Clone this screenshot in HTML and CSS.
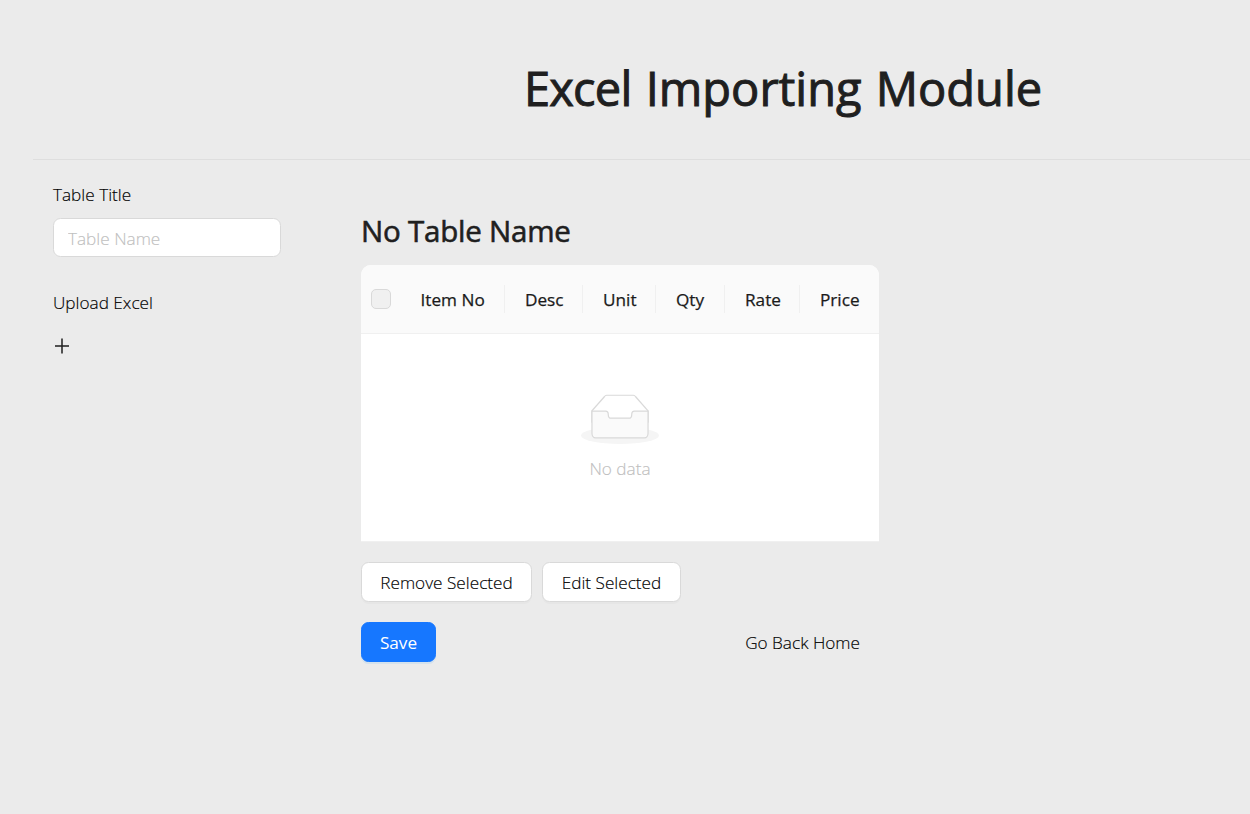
FILE: index.html
```html
<!DOCTYPE html>
<html lang="en">
<head>
<meta charset="utf-8">
<title>Excel Importing Module</title>
<link rel="stylesheet" href="styles.css">
</head>
<body>
<div class="page">
  <header class="header"><h1 class="title"><span class="title-lead">Excel</span> Importing Module</h1></header>
  <div class="content">
    <aside class="sidebar">
      <label class="label label-title" for="table-name">Table Title</label>
      <input class="input" id="table-name" type="text" placeholder="Table Name">
      <div class="label label-upload">Upload Excel</div>
      <svg class="plus" viewBox="0 0 18 18" width="18" height="18"><path d="M9 1.5v15M2 9h14" fill="none" stroke="#1f1f1f" stroke-width="1.5"/></svg>
    </aside>
    <main class="main">
      <h2 class="table-name">No Table Name</h2>
      <div class="table">
        <div class="table-head">
          <div class="cell cell-check"><span class="checkbox"></span></div>
          <div class="cell cell-item"><span>Item No</span></div>
          <div class="cell cell-desc"><span>Desc</span></div>
          <div class="cell cell-unit"><span>Unit</span></div>
          <div class="cell cell-qty"><span>Qty</span></div>
          <div class="cell cell-rate"><span>Rate</span></div>
          <div class="cell cell-price"><span>Price</span></div>
        </div>
        <div class="empty">
          <svg class="empty-icon" viewBox="0 0 64 41" width="78" height="50">
            <g transform="translate(0 1)" fill="none" fill-rule="evenodd">
              <ellipse fill="#f5f5f5" cx="32" cy="33" rx="32" ry="7"/>
              <g fill-rule="nonzero" stroke="#d9d9d9">
                <path d="M55 12.76L44.854 1.258C44.367.474 43.656 0 42.907 0H21.093c-.749 0-1.46.474-1.947 1.257L9 12.761V22h46v-9.24z"/>
                <path d="M41.613 15.931c0-1.605.994-2.93 2.227-2.931H55v18.137C55 33.26 53.68 35 52.05 35h-40.1C10.32 35 9 33.259 9 31.137V13h11.16c1.233 0 2.227 1.323 2.227 2.928v.022c0 1.605 1.005 2.901 2.237 2.901h14.752c1.232 0 2.237-1.308 2.237-2.913v-.007z" fill="#fafafa"/>
              </g>
            </g>
          </svg>
          <div class="empty-text">No data</div>
        </div>
      </div>
      <div class="actions">
        <button class="btn btn-remove" type="button">Remove Selected</button>
        <button class="btn btn-edit" type="button">Edit Selected</button>
      </div>
      <div class="footer">
        <button class="btn btn-primary" type="button">Save</button>
        <a class="home">Go Back Home</a>
      </div>
    </main>
  </div>
</div>
</body>
</html>
```

FILE: styles.css
```css
* { box-sizing: border-box; }
body {
  margin: 0;
  height: 814px;
  overflow: hidden;
  background: #ebebeb;
  color: #1f1f1f;
  font: 300 17.2px/28px "Open Sans", "Noto Sans", sans-serif;
  -webkit-text-stroke-width: 0.15px;
}
.page { padding-left: 33px; }
.header {
  height: 160px;
  padding: 58px 0 0 491px;
  border-bottom: 1px solid #dedede;
}
.title { margin: 0; font-size: 47px; line-height: 60px; font-weight: 500; word-spacing: 2px; white-space: nowrap; -webkit-text-stroke-width: 1px; }
.title-lead { letter-spacing: -0.8px; }
.content { display: flex; }
.sidebar { width: 248px; padding: 21px 0 0 20px; }
.label { display: block; white-space: nowrap; color: #000; }
.input {
  display: block;
  width: 228px;
  height: 39px;
  margin: 9px 0 32px;
  padding: 2px 14px 0;
  border: 1px solid #d9d9d9;
  border-radius: 7.5px;
  background: #fff;
  font: inherit;
}
.input::placeholder { color: #bfbfbf; opacity: 1; }
.plus { display: block; margin-top: 20px; }
.main { width: 518px; margin-left: 80px; padding-top: 51px; }
.table-name { margin: 0; font-size: 29.5px; letter-spacing: -0.22px; line-height: 40px; font-weight: 500; white-space: nowrap; -webkit-text-stroke-width: 0.6px; }
.table { margin-top: 14px; height: 277px; background: #fff; border-radius: 10px 10px 0 0; border-bottom: 1px solid #f0f0f0; }
.table-head { display: flex; height: 69px; background: #fafafa; border-bottom: 1px solid #f0f0f0; border-radius: 10px 10px 0 0; align-items: center; }
.cell { height: 28px; padding-left: 20px; border-right: 1px solid #f0f0f0; line-height: 30px; font-weight: 500; white-space: nowrap; color: #1a1a1a; -webkit-text-stroke-width: 0.25px; }
.cell-check { width: 40px; padding: 4px 10px; border: 0; }
.cell-item { width: 104px; padding-left: 19.5px; }
.cell-desc { width: 78px; }
.cell-unit { width: 73px; }
.cell-qty { width: 69px; }
.cell-rate { width: 75px; }
.cell-price { width: 79px; border: 0; }
.checkbox { display: block; width: 20px; height: 20px; background: #f0f0f0; border: 1px solid #d9d9d9; border-radius: 5px; }
.empty { display: flex; flex-direction: column; align-items: center; padding-top: 60px; }
.empty-icon { display: block; }
.empty-text { margin-top: 11px; color: #bfbfbf; }
.actions { display: flex; gap: 10px; margin-top: 20px; }
.btn {
  height: 40px;
  padding: 2px 0 0;
  border: 1px solid #d9d9d9;
  border-radius: 7.5px;
  background: #fff;
  box-shadow: 0 2px 0 rgba(0, 0, 0, 0.02);
  color: #000;
  font: inherit;
  white-space: nowrap;
}
.btn-remove { width: 171px; }
.btn-edit { width: 139px; }
.footer { display: flex; justify-content: space-between; align-items: center; margin-top: 20px; padding-right: 19px; }
.btn-primary { width: 75px; border-color: #1677ff; background: #1677ff; color: #fff; font-weight: 400; -webkit-text-stroke-width: 0; box-shadow: 0 2px 0 rgba(5, 145, 255, 0.1); }
.home { padding-top: 2px; color: #000; white-space: nowrap; }
```
